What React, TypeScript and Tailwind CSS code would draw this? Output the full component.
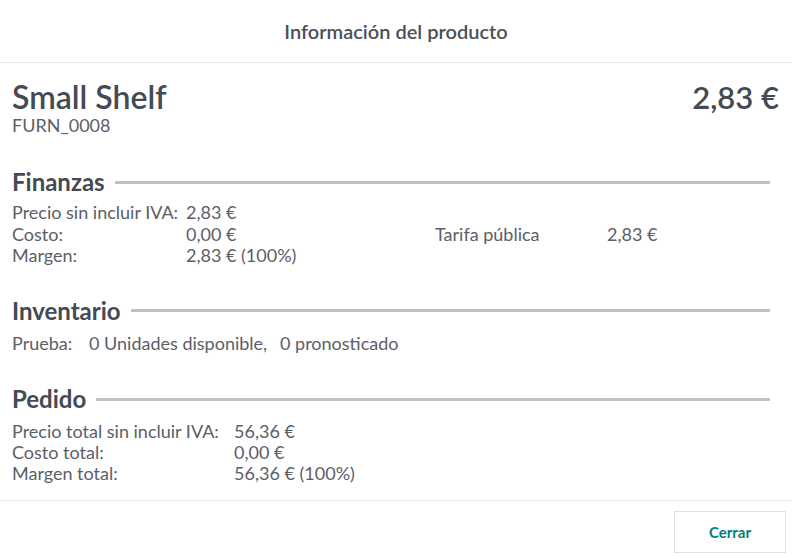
import React from "react";

function SectionTitle({ children }: { children: React.ReactNode }) {
  return (
    <div className="flex items-center gap-[10px] mr-[9px]">
      <span className="text-[24px] font-bold text-[#454a53] leading-[28px]">{children}</span>
      <div className="flex-1 h-[3px] bg-[#c0c0c0]" />
    </div>
  );
}

export default function App() {
  return (
    <div
      className="w-[792px] h-[557px] bg-white flex flex-col text-[#5b6068]"
      style={{ fontFamily: "Lato, 'Noto Sans', sans-serif" }}
    >
      <div className="h-[63px] shrink-0 flex items-center justify-center border-b border-[#e6e6e6]">
        <span className="text-[20px] font-semibold text-[#4a4f57]">Información del producto</span>
      </div>

      <div className="flex-1 pl-[12px] pr-[13px] pt-[15px]">
        <div className="flex justify-between items-start">
          <div className="flex flex-col">
            <span className="text-[32px] font-semibold text-[#454a53] leading-[38px]">Small Shelf</span>
            <span className="text-[18px] leading-[18px] text-[#5b6068]">FURN_0008</span>
          </div>
          <span className="text-[31px] font-semibold text-[#454a53] leading-[38px]">2,83 €</span>
        </div>

        <div className="mt-[34px]">
          <SectionTitle>Finanzas</SectionTitle>
          <div className="grid grid-cols-[423px_1fr] mt-[6px] text-[18px] leading-[21.6px]">
            <div className="grid grid-cols-[174px_1fr]">
              <span>Precio sin incluir IVA:</span>
              <span>2,83 €</span>
              <span>Costo:</span>
              <span>0,00 €</span>
              <span>Margen:</span>
              <span>2,83 € (100%)</span>
            </div>
            <div className="grid grid-cols-[172px_1fr] content-start pt-[21.6px]">
              <span>Tarifa pública</span>
              <span>2,83 €</span>
            </div>
          </div>
        </div>

        <div className="mt-[30px]">
          <SectionTitle>Inventario</SectionTitle>
          <div className="mt-[8px] text-[18px] leading-[21.6px] flex">
            <span className="w-[77px]">Prueba:</span>
            <span className="w-[191px]">0 Unidades disponible,</span>
            <span>0 pronosticado</span>
          </div>
        </div>

        <div className="mt-[31px]">
          <SectionTitle>Pedido</SectionTitle>
          <div className="grid grid-cols-[222px_1fr] mt-[8px] text-[18px] leading-[20.7px]">
            <span>Precio total sin incluir IVA:</span>
            <span>56,36 €</span>
            <span>Costo total:</span>
            <span>0,00 €</span>
            <span>Margen total:</span>
            <span>56,36 € (100%)</span>
          </div>
        </div>
      </div>

      <div className="h-[57px] shrink-0 border-t border-[#e6e6e6] flex items-start justify-end pt-[10px] pr-[6px]">
        <button className="w-[112px] h-[42px] border border-[#dee2e6] bg-white text-[#017e84] text-[15px] font-bold">
          Cerrar
        </button>
      </div>
    </div>
  );
}
